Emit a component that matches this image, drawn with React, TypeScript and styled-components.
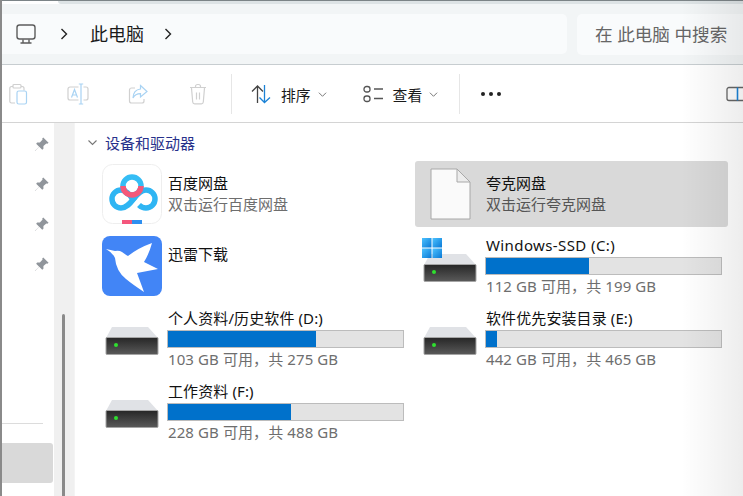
import React from "react";
import styled, { createGlobalStyle } from "styled-components";

const Global = createGlobalStyle`
  html, body { margin: 0; padding: 0; background: #fff; }
  body { font-family: "Noto Sans", "Noto Sans CJK SC", sans-serif; }
  * { box-sizing: border-box; }
`;

const Page = styled.div`
  position: relative;
  width: 743px;
  height: 496px;
  overflow: hidden;
  display: flex;
  flex-direction: column;
  background: #fff;
  border-left: 2px solid #8a8a8a;
  color: #111;
`;
const TopStrip = styled.div`
  height: 4px;
  display: flex;
  background: #fff;
  border-top: 1px solid #7c8487;
`;
const TabEdge = styled.div`
  flex: 1;
  margin-left: 56px;
  background: #dde3e5;
  border-bottom-left-radius: 4px;
`;
const AddressBar = styled.div`
  height: 61px;
  flex: none;
  display: flex;
  gap: 10px;
  padding: 10px 0 10px 0;
  background: #f2f5f6;
  border-bottom: 1px solid #c7cdd0;
`;
const AddressPill = styled.div`
  width: 565px;
  height: 40px;
  flex: none;
  display: flex;
  align-items: center;
  background: #f9fbfc;
  border-radius: 0 5px 5px 0;
  padding-left: 13px;
`;
const Crumb = styled.span`
  font-size: 18px;
  line-height: 24px;
  color: #1a1a1a;
  margin: 0 19px 0 21px;
`;
const CrumbSep = styled.span`
  display: flex;
  margin-left: 22px;
`;
const SearchPill = styled.div`
  flex: 1;
  height: 41px;
  display: flex;
  align-items: center;
  padding: 0 0 2px 18px;
  background: #f9fbfc;
  border-radius: 5px 0 0 5px;
  font-size: 17.6px;
  color: #666;
  white-space: nowrap;
`;
const Toolbar = styled.div`
  height: 58px;
  flex: none;
  display: flex;
  align-items: center;
  padding-left: 5px;
  border-bottom: 1px solid #d4d4d4;
`;
const ToolGroup = styled.div`
  display: flex;
  align-items: center;
  gap: 38px;
`;
const Divider = styled.div<{ $left: number; $right: number }>`
  width: 1px;
  height: 40px;
  background: #e6e6e6;
  margin: 0 ${(p) => p.$right}px 0 ${(p) => p.$left}px;
`;
const MenuButton = styled.div<{ $gap: number }>`
  display: flex;
  align-items: center;
  font-size: 14.8px;
  line-height: 22px;
  padding-top: 2px;
  color: #1a1a1a;
  margin-right: ${(p) => p.$gap}px;
  svg:first-child { margin: -2px 10px 0 0; }
  svg:last-child { margin: 0 0 0 7px; }
`;
const Dots = styled.div`
  display: flex;
  gap: 4px;
  i { display: block; width: 4px; height: 4px; border-radius: 50%; background: #222; }
`;
const PanelIcon = styled.div`
  margin-left: auto;
  display: flex;
`;
const Body = styled.div`
  flex: 1;
  min-height: 0;
  display: flex;
`;
const Sidebar = styled.div`
  width: 52px;
  flex: none;
  display: flex;
  flex-direction: column;
`;
const PinRow = styled.div`
  height: 40px;
  flex: none;
  display: flex;
  align-items: center;
  justify-content: flex-end;
  padding: 2px 5px 0 0;
`;
const SideRule = styled.div`
  height: 1px;
  width: 41px;
  flex: none;
  margin-top: 140px;
  background: #dcdcdc;
`;
const SideSelected = styled.div`
  height: 40px;
  flex: none;
  margin-top: 19px;
  width: 51px;
  background: #d9d9d9;
  border-radius: 0 3px 3px 0;
`;
const ScrollTrack = styled.div`
  width: 20px;
  flex: none;
  padding: 191px 0 0 8px;
  background: #f0f0f0;
`;
const ScrollThumb = styled.div`
  width: 3px;
  height: 100%;
  border-radius: 2px 2px 0 0;
  background: #8a8a8a;
`;
const Content = styled.div`
  flex: 1;
  min-width: 0;
  border-left: 1px solid #f4f4f4;
  padding-left: 22px;
`;
const SectionHead = styled.div`
  height: 38px;
  display: flex;
  align-items: center;
  margin-left: -10px;
  gap: 7px;
  padding-top: 1px;
  font-size: 15px;
  color: #27318b;
`;
const TileGrid = styled.div`
  display: grid;
  grid-template-columns: 313px 313px;
  grid-template-rows: 66px 69px 69px 69px;
  column-gap: 5px;
  row-gap: 4px;
`;
const Tile = styled.div<{ $selected?: boolean }>`
  display: grid;
  grid-template-columns: 70px 1fr;
  column-gap: 1px;
  border-radius: 3px;
  background: ${(p) => (p.$selected ? "#d9d9d9" : "transparent")};
`;
const IconSlot = styled.div`
  display: flex;
  align-items: center;
  justify-content: center;
`;
const TextCol = styled.div<{ $top: number }>`
  padding-top: ${(p) => p.$top}px;
  display: flex;
  flex-direction: column;
  align-items: flex-start;
`;
const Name = styled.div<{ $track?: number }>`
  font-size: 15px;
  line-height: 20px;
  letter-spacing: ${(p) => p.$track ?? 0}px;
  color: #111;
  white-space: nowrap;
`;
const Sub = styled.div<{ $track?: number }>`
  font-size: 15px;
  line-height: 20px;
  margin-top: ${(p) => (p.$track ? 0 : 1)}px;
  letter-spacing: ${(p) => p.$track ?? 0}px;
  color: #6e6e6e;
  white-space: nowrap;
`;
const FileSub = styled(Sub)`
  color: #555;
`;
const Bar = styled.div`
  width: 237px;
  height: 18px;
  margin: 2px 0 1px -1px;
  background: #e3e3e3;
  border: 1px solid #bcbcbc;
`;
const BarFill = styled.div`
  height: 100%;
  background: #0071cb;
`;
const EdgeFade = styled.div`
  position: absolute;
  top: 0;
  right: 0;
  bottom: 0;
  width: 62px;
  pointer-events: none;
  background: linear-gradient(to right, rgba(0,0,0,0), rgba(0,0,0,0.07));
`;

const Computer = () => (
  <svg width="22" height="22" viewBox="0 0 22 22" fill="none" stroke="#5c5c5c" strokeWidth="1.4">
    <rect x="2" y="2" width="18" height="14" rx="2.5" />
    <path d="M8 16.5v3M14 16.5v3M5.5 20h11" />
  </svg>
);
const Chevron = () => (
  <svg width="10" height="14" viewBox="0 0 10 14" fill="none" stroke="#222" strokeWidth="1.4">
    <path d="M2.5 2l5 5-5 5" />
  </svg>
);
const Down = ({ c = "#777", w = 9 }: { c?: string; w?: number }) => (
  <svg width={w} height="7" viewBox="0 0 10 7" fill="none" stroke={c} strokeWidth="1.1">
    <path d="M1 1.5l4 4 4-4" />
  </svg>
);
const Pin = () => (
  <svg width="15" height="15" viewBox="0 0 14 14" fill="#90959b">
    <path d="M8.6 0.4L13.6 5.4 12.5 6.3 11.5 6 8.8 8.5 8.8 11 7.7 12 4.9 9.1 1 13 0.9 13 0.9 12.9 4.8 9 2 6.2 3 5.2 5.5 5.2 8 2.4 7.7 1.4Z" />
  </svg>
);
const PasteIcon = () => (
  <svg width="22" height="22" viewBox="0 0 22 22" fill="none" strokeWidth="1.2">
    <path d="M8 20H4.500A1.800 1.800 0 0 1 2.800 18V5.500A1.800 1.800 0 0 1 4.500 3.500H6M14 3.500h1A1.800 1.800 0 0 1 17 5.500v2" stroke="#d0d0d0" />
    <rect x="6" y="1.500" width="8" height="3.500" rx="1" stroke="#d0d0d0" />
    <rect x="10" y="8" width="9.500" height="13" rx="1.800" stroke="#a9d3f3" />
  </svg>
);
const RenameIcon = () => (
  <svg width="22" height="22" viewBox="0 0 22 22" fill="none" strokeWidth="1.2">
    <path d="M11.500 4H3A2 2 0 0 0 1 6v9a2 2 0 0 0 2 2h8.500M16.500 4H19a2 2 0 0 1 2 2v9a2 2 0 0 1-2 2h-2.500" stroke="#d0d0d0" />
    <path d="M14 1v20M11.800 1h4.400M11.800 21h4.400" stroke="#a9d3f3" />
    <path d="M4.500 14.500L7.500 6.500l3 8M5.500 12h4" stroke="#a9d3f3" />
  </svg>
);
const ShareIcon = () => (
  <svg width="22" height="22" viewBox="0 0 22 22" fill="none" strokeWidth="1.2">
    <path d="M8 5H4.500A2 2 0 0 0 2.500 7v11a2 2 0 0 0 2 2h10.500a2 2 0 0 0 2-2v-2" stroke="#d0d0d0" />
    <path d="M13.500 2.500L20 8.500 13.500 14v-3.300C10 10.700 7.500 12 6 15c.2-5 3-8.500 7.500-9Z" stroke="#a9d3f3" />
  </svg>
);
const TrashIcon = () => (
  <svg width="22" height="22" viewBox="0 0 22 22" fill="none" stroke="#d0d0d0" strokeWidth="1.2">
    <path d="M3 4.500h16M8.500 4.500V3.500A2 2 0 0 1 10.500 1.500h1A2 2 0 0 1 13.500 3.500v1" />
    <path d="M4.500 5l1.200 14a2 2 0 0 0 2 1.800h6.600a2 2 0 0 0 2-1.800L17.500 5" />
    <path d="M9.500 9.500v7M12.500 9.500v7" />
  </svg>
);
const SortIcon = () => (
  <svg width="20" height="20" viewBox="0 0 20 20" fill="none" strokeWidth="1.3">
    <path d="M6.500 19V2M1 7.500L6.500 2 12 7.500" stroke="#444" />
    <path d="M13.500 1v17.500M8.500 13.500L13.500 18.500 19 13.500" stroke="#1b82d6" />
  </svg>
);
const ViewIcon = () => (
  <svg width="20" height="18" viewBox="0 0 20 18" fill="none" stroke="#555" strokeWidth="1.3">
    <rect x="1" y="1.500" width="6" height="5.500" rx="2.500" />
    <rect x="1" y="11" width="6" height="5.500" rx="2.500" />
    <path d="M11 4h9M11 13.500h9" />
  </svg>
);
const Panel = () => (
  <svg width="17" height="16" viewBox="0 0 17 16" fill="none" strokeWidth="1.3">
    <path d="M17 1.500H3A2 2 0 0 0 1 3.500v9a2 2 0 0 0 2 2h14" stroke="#666" />
    <path d="M11.500 1.500v13" stroke="#1b82d6" strokeWidth="1.600" />
  </svg>
);
const BaiduIcon = () => (
  <svg width="60" height="60" viewBox="0 0 60 60" fill="none">
    <rect x="0.500" y="0.500" width="59" height="59" rx="10" fill="#fff" stroke="#eeeeee" />
    <circle cx="30" cy="22" r="9" stroke="#35bdf5" strokeWidth="5.500" />
    <path d="M19 26a9 9 0 1 0 0 18c11 0 14-18 25-18a9 9 0 0 1 0 18c-3 0-5-1-7-3" stroke="#2fb5f3" strokeWidth="5.500" />
    <path d="M19 26c5 0 8 4 11 8l3 3" stroke="#2fb5f3" strokeWidth="5.500" />
    <path d="M21 22a9 9 0 0 0 18 0" stroke="#f4587a" strokeWidth="5.500" />
    <rect x="20" y="56" width="10" height="4" fill="#f4567c" />
    <rect x="30" y="56" width="10" height="4" fill="#2e8ff0" />
  </svg>
);
const ThunderIcon = () => (
  <svg width="60" height="60" viewBox="0 0 60 60">
    <rect width="60" height="60" rx="8" fill="#4285f6" />
    <path d="M4 13L13 15Q17 14 20 16Q24 19 26 20Q36 12 50 7Q47 18 42 26L56 33L35 37L42 56Q30 48 24 43Q14 35 13 22Q11 17 4 13Z" fill="#fff" />
  </svg>
);
const FileIcon = () => (
  <svg width="41" height="52" viewBox="0 0 41 52">
    <path d="M1 1H27L40 14V51H1Z" fill="#fafafa" stroke="#a8a8a8" />
    <path d="M27 1V14H40Z" fill="#ececec" stroke="#a8a8a8" />
  </svg>
);
const DriveIcon = ({ windows }: { windows?: boolean }) => (
  <svg width="60" height="60" viewBox="0 0 60 60">
    <defs>
      <linearGradient id="front" x1="0" y1="0" x2="0" y2="1">
        <stop offset="0" stopColor="#262626" />
        <stop offset="1" stopColor="#5a5a5a" />
      </linearGradient>
      <linearGradient id="win" x1="0" y1="0" x2="1" y2="1">
        <stop offset="0" stopColor="#4cc2ff" />
        <stop offset="1" stopColor="#0a79d6" />
      </linearGradient>
    </defs>
    <path d="M10 18H46L56 29H4Z" fill="#e0e2e6" />
    <rect x="4" y="28.500" width="52" height="17" rx="1" fill="url(#front)" stroke="#a5a5a5" />
    <circle cx="14" cy="36" r="2" fill="#2fe02f" />
    {windows && (
      <g fill="url(#win)">
        <rect x="2" y="2" width="9.500" height="9.500" />
        <rect x="12.500" y="2" width="9.500" height="9.500" />
        <rect x="2" y="12.500" width="9.500" height="9.500" />
        <rect x="12.500" y="12.500" width="9.500" height="9.500" />
      </g>
    )}
  </svg>
);

const Drive = ({ name, sub, pct, track = 0.1, windows }: { name: string; sub: string; pct: number; track?: number; windows?: boolean }) => (
  <Tile>
    <IconSlot>
      <DriveIcon windows={windows} />
    </IconSlot>
    <TextCol $top={4}>
      <Name $track={track}>{name}</Name>
      <Bar>
        <BarFill style={{ width: `${pct}%` }} />
      </Bar>
      <Sub $track={0.1}>{sub}</Sub>
    </TextCol>
  </Tile>
);

export default function App() {
  return (
    <>
      <Global />
      <Page>
        <TopStrip>
          <TabEdge />
        </TopStrip>
        <AddressBar>
          <AddressPill>
            <Computer />
            <CrumbSep>
              <Chevron />
            </CrumbSep>
            <Crumb>此电脑</Crumb>
            <Chevron />
          </AddressPill>
          <SearchPill>在 此电脑 中搜索</SearchPill>
        </AddressBar>
        <Toolbar>
          <ToolGroup>
            <PasteIcon />
            <RenameIcon />
            <ShareIcon />
            <TrashIcon />
          </ToolGroup>
          <Divider $left={22} $right={19} />
          <MenuButton $gap={36}>
            <SortIcon />
            排序
            <Down />
          </MenuButton>
          <MenuButton $gap={21}>
            <ViewIcon />
            查看
            <Down />
          </MenuButton>
          <Divider $left={0} $right={21} />
          <Dots>
            <i />
            <i />
            <i />
          </Dots>
          <PanelIcon>
            <Panel />
          </PanelIcon>
        </Toolbar>
        <Body>
          <Sidebar>
            <PinRow><Pin /></PinRow>
            <PinRow><Pin /></PinRow>
            <PinRow><Pin /></PinRow>
            <PinRow><Pin /></PinRow>
            <SideRule />
            <SideSelected />
          </Sidebar>
          <ScrollTrack>
            <ScrollThumb />
          </ScrollTrack>
          <Content>
            <SectionHead>
              <Down c="#777" w={11} />
              设备和驱动器
            </SectionHead>
            <TileGrid>
              <Tile>
                <IconSlot><BaiduIcon /></IconSlot>
                <TextCol $top={12}>
                  <Name>百度网盘</Name>
                  <Sub>双击运行百度网盘</Sub>
                </TextCol>
              </Tile>
              <Tile $selected>
                <IconSlot><FileIcon /></IconSlot>
                <TextCol $top={12}>
                  <Name>夸克网盘</Name>
                  <FileSub>双击运行夸克网盘</FileSub>
                </TextCol>
              </Tile>
              <Tile>
                <IconSlot><ThunderIcon /></IconSlot>
                <TextCol $top={13}>
                  <Name>迅雷下载</Name>
                </TextCol>
              </Tile>
              <Drive windows track={0.4} name="Windows-SSD (C:)" sub="112 GB 可用，共 199 GB" pct={44} />
              <Drive name="个人资料/历史软件 (D:)" sub="103 GB 可用，共 275 GB" pct={63} />
              <Drive name="软件优先安装目录 (E:)" sub="442 GB 可用，共 465 GB" pct={4.7} />
              <Drive name="工作资料 (F:)" sub="228 GB 可用，共 488 GB" pct={52.5} />
            </TileGrid>
          </Content>
        </Body>
        <EdgeFade />
      </Page>
    </>
  );
}
